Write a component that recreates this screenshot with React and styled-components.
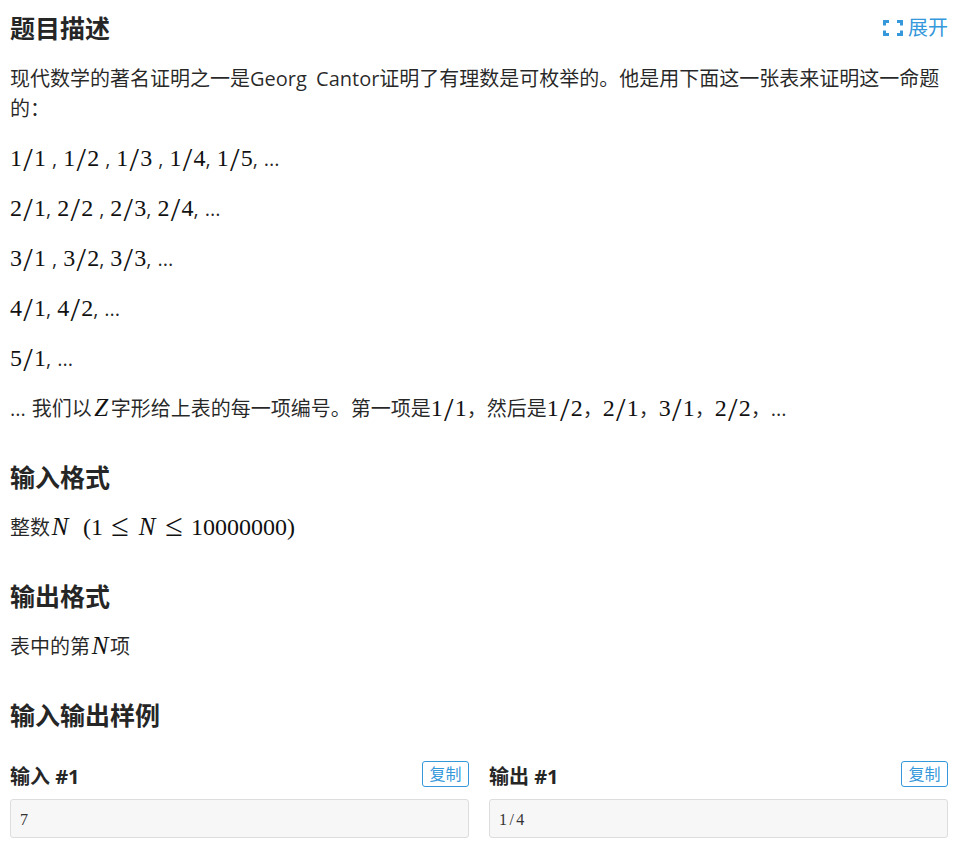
import React from "react"
import styled, { createGlobalStyle } from "styled-components"

const GlobalStyle = createGlobalStyle`
  html, body {
    margin: 0;
    padding: 0;
    background: #fff;
  }
  body {
    font-family: "Open Sans", "Noto Sans CJK SC", sans-serif;
    font-size: 20px;
    line-height: 30px;
    color: rgba(0, 0, 0, 0.85);
    overflow: hidden;
  }
`

const Page = styled.div`
  width: 938px;
  height: 852px;
  padding: 0 15px 0 10px;
  overflow: hidden;
`

const TitleRow = styled.div`
  display: flex;
  justify-content: space-between;
  align-items: center;
  height: 56px;
  margin-bottom: 8px;
`

const Heading = styled.h2`
  margin: 34px 0 17px;
  font-size: 25px;
  line-height: 38px;
  font-weight: 700;
  color: #262626;
`

const PageTitle = styled(Heading)`
  margin: 0;
`

const ExpandLink = styled.a`
  display: flex;
  align-items: center;
  gap: 5px;
  color: #3498db;
  font-size: 20px;
  cursor: pointer;
`

const Para = styled.p`
  margin: 0 0 20px;
  height: ${props => (props.$lines || 1) * 30}px;
  font-size: 20px;
  line-height: 30px;
  word-spacing: ${props => props.$space || 0.8}px;
`

const Math = styled.span`
  font-family: "Liberation Serif", serif;
  font-size: 24px;
  line-height: 1;
  color: #111;
`

const Letter = styled.span`
  display: inline-block;
  width: ${props => props.$w}px;
  font-family: "Liberation Serif", serif;
  font-size: 25px;
  line-height: 1;
  font-style: italic;
  color: #111;
  text-align: center;
`

const Rel = styled.span`
  display: inline-block;
  width: 19px;
  margin: 0 7.5px;
  font-size: 32px;
  line-height: 24px;
  text-align: center;
  vertical-align: -1px;
`

const Slash = styled.span`
  display: inline-block;
  width: 12px;
  height: 24px;
  font-size: 34px;
  font-weight: 400;
  line-height: 24px;
  text-align: center;
  vertical-align: -5px;
`

const Gap = styled.span`
  display: inline-block;
  width: ${props => props.$w}px;
`

const Samples = styled.div`
  display: grid;
  grid-template-columns: 1fr 1fr;
  column-gap: 20px;
  margin-top: 27px;
`

const SampleHead = styled.div`
  display: flex;
  justify-content: space-between;
  align-items: flex-start;
  height: 38px;
`

const SampleTitle = styled.h3`
  margin: 1px 0 0;
  font-size: 20px;
  line-height: 30px;
  font-weight: 700;
  color: #262626;
`

const CopyButton = styled.button`
  width: 47px;
  height: 26px;
  padding: 0;
  background: #fff;
  border: 1px solid #3498db;
  border-radius: 3px;
  color: #3498db;
  font-family: inherit;
  font-size: 16px;
  line-height: 24px;
`

const SampleBox = styled.pre`
  margin: 0;
  box-sizing: border-box;
  height: 39px;
  padding: 0 9px;
  background: #f7f7f7;
  border: 1px solid #ddd;
  border-radius: 3px;
  font-family: "Liberation Serif", serif;
  font-size: 16px;
  letter-spacing: 2.4px;
  line-height: 39px;
  color: #333;
`

const ExpandIcon = () => (
  <svg width="20" height="16" viewBox="0 0 20 16" fill="none" stroke="#3498db" strokeWidth="3">
    <path d="M1.5 5.5V1.5H6" />
    <path d="M14 1.5H18.5V5.5" />
    <path d="M1.5 10.5V14.5H6" />
    <path d="M14 14.5H18.5V10.5" />
  </svg>
)

const Frac = ({ a, b }) => (
  <Math>{a}<Slash>/</Slash>{b}</Math>
)

const Row = ({ items }) => (
  <Para>
    {items.map((item, i) => (
      <React.Fragment key={i}>
        <Frac a={item[0]} b={item[1]} />
        {item[2]}
      </React.Fragment>
    ))}
    ...
  </Para>
)

const App = () => (
  <Page>
    <GlobalStyle />
    <TitleRow>
      <PageTitle>题目描述</PageTitle>
      <ExpandLink>
        <ExpandIcon />
        展开
      </ExpandLink>
    </TitleRow>
    <Para $lines={2} $space={4}>现代数学的著名证明之一是Georg Cantor证明了有理数是可枚举的。他是用下面这一张表来证明这一命题的：</Para>
    <Row items={[[1, 1, ' , '], [1, 2, ' , '], [1, 3, ' , '], [1, 4, ', '], [1, 5, ', ']]} />
    <Row items={[[2, 1, ', '], [2, 2, ' , '], [2, 3, ', '], [2, 4, ', ']]} />
    <Row items={[[3, 1, ' , '], [3, 2, ', '], [3, 3, ', ']]} />
    <Row items={[[4, 1, ', '], [4, 2, ', ']]} />
    <Row items={[[5, 1, ', ']]} />
    <Para>
      ... 我们以<Letter $w={19}>Z</Letter>字形给上表的每一项编号。第一项是<Frac a={1} b={1} />，然后是<Frac a={1} b={2} />，<Frac a={2} b={1} />，<Frac a={3} b={1} />，<Frac a={2} b={2} />，...
    </Para>
    <Heading>输入格式</Heading>
    <Para>
      整数<Letter $w={20}>N</Letter><Gap $w={13} />
      <Math>(1<Rel>≤</Rel><Letter $w={20}>N</Letter><Rel>≤</Rel>10000000)</Math>
    </Para>
    <Heading>输出格式</Heading>
    <Para>表中的第<Letter $w={20}>N</Letter>项</Para>
    <Heading>输入输出样例</Heading>
    <Samples>
      <div>
        <SampleHead>
          <SampleTitle>输入 #1</SampleTitle>
          <CopyButton>复制</CopyButton>
        </SampleHead>
        <SampleBox>7</SampleBox>
      </div>
      <div>
        <SampleHead>
          <SampleTitle>输出 #1</SampleTitle>
          <CopyButton>复制</CopyButton>
        </SampleHead>
        <SampleBox>1/4</SampleBox>
      </div>
    </Samples>
  </Page>
)

export default App
